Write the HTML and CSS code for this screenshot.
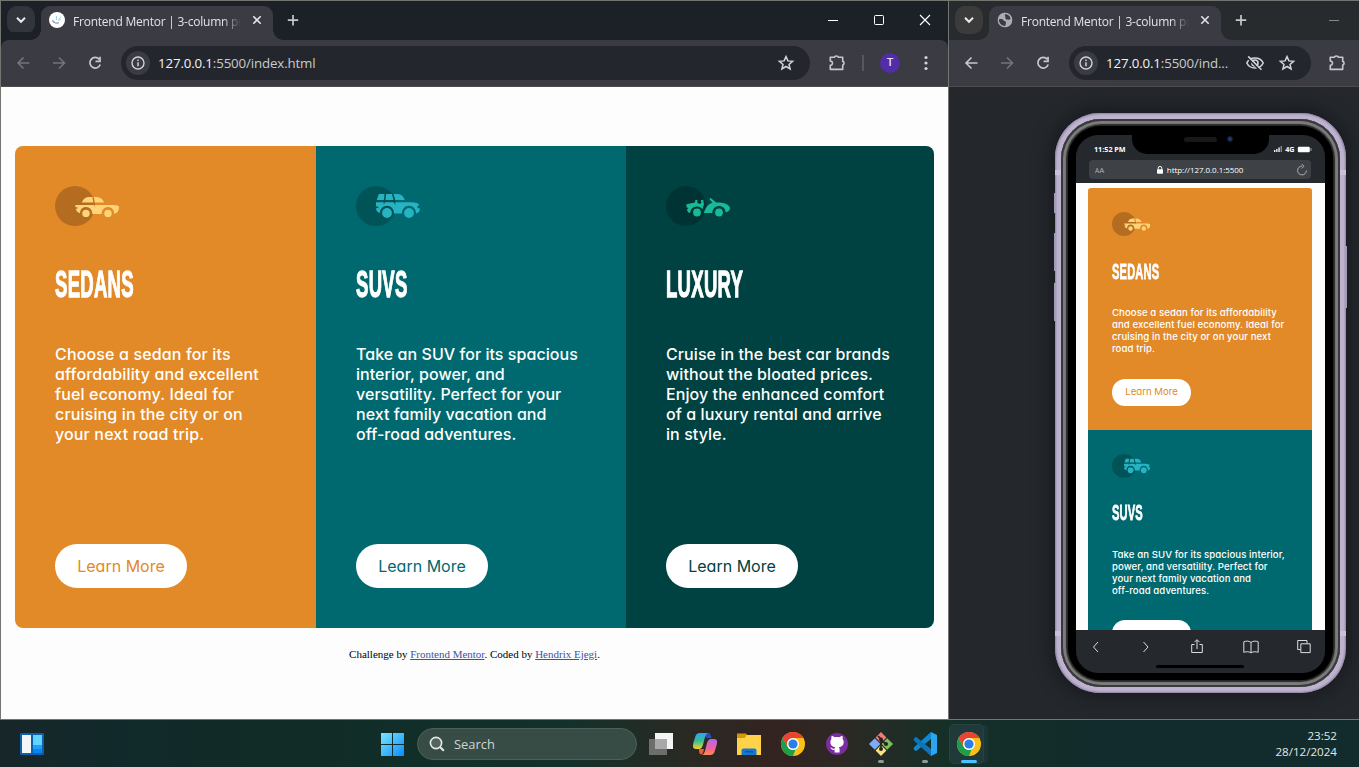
FILE: index.html
```html
<!DOCTYPE html>
<html lang="en">
<head>
<meta charset="utf-8">
<title>Desktop</title>
<link rel="stylesheet" href="styles.css">
</head>
<body>
<svg class="defs" width="0" height="0" aria-hidden="true">
  <symbol id="chev" viewBox="0 0 28 28"><path d="M10 11.8l4 4 4-4" fill="none" stroke="#e8eaed" stroke-width="2"/></symbol>
  <symbol id="close" viewBox="0 0 16 16"><path d="M4.3 4.3l7.4 7.4M11.7 4.3l-7.4 7.4" fill="none" stroke="#e3e3e3" stroke-width="1.6"/></symbol>
  <symbol id="plus" viewBox="0 0 28 28"><path d="M14 9v10.400M8.800 14.200h10.400" fill="none" stroke="#c7c8cc" stroke-width="1.700"/></symbol>
  <symbol id="back" viewBox="0 0 36 36"><path d="M24.500 18H13.300M18.500 12.500L13 18l5.500 5.500" fill="none" stroke="currentColor" stroke-width="1.600"/></symbol>
  <symbol id="fwd" viewBox="0 0 36 36"><path d="M12 18h11.200M18 12.500l5.500 5.500-5.500 5.500" fill="none" stroke="currentColor" stroke-width="1.600"/></symbol>
  <symbol id="reload" viewBox="0 0 36 36"><path d="M22.300 14.400A5.300 5.300 0 1 0 23.200 19.500" fill="none" stroke="#c7c8cc" stroke-width="1.700"/><path d="M23.900 11.800v5.400h-5.400v-1.600h3.700v-3.800z" fill="#c7c8cc"/></symbol>
  <symbol id="info" viewBox="0 0 24 24"><circle cx="12" cy="12" r="12" fill="#3a3b43"/><circle cx="12" cy="12" r="6" fill="none" stroke="#d3d4d8" stroke-width="1.400"/><path d="M12 11.300v4M12 8.500v1.500" stroke="#d3d4d8" stroke-width="1.500"/></symbol>
  <symbol id="star" viewBox="0 0 20 20"><path d="M10 3.600l1.900 4.300 4.700.4-3.600 3.100 1.100 4.600L10 13.500 5.900 16 7 11.400 3.400 8.300l4.700-.4z" fill="none" stroke="#d3d4d8" stroke-width="1.500"/></symbol>
  <symbol id="puzzle" viewBox="0 0 36 36"><path d="M11.300 12.200h4.200c.2-1.700 3.600-1.700 3.800 0h4.400v4.200c1.800.2 1.800 3.500 0 3.700v4.300H11.300v-4c3-.7 3-3.800 0-4.500z" fill="none" stroke="#c7c8cc" stroke-width="1.600" stroke-linejoin="round"/></symbol>
  <symbol id="sedan" viewBox="0 0 64 40"><circle cx="20" cy="20" r="20" fill="#000" opacity=".2"/><g fill="#ffd477"><path d="M26.800 16.600c1.500-3.800 4-5.600 7.600-5.600h3l1 5.600zM38.900 11c5.500-.4 9 1.800 10.300 5.600h-9.400z"/><path d="M20.300 19h18.900l1.200 3.200-.6-3.200h18.500c3.300.2 5.600.8 5.700 1.700 0 4.100-1.500 6.400-4.800 7.300.3-4.200-2.600-7-6.200-7-3.700 0-6.500 3-6.300 6.900H37.300c.2-4-2.600-6.900-6.300-6.900-3.600 0-6 2.700-6 6.300-2.400-.8-3.500-2.100-4.200-4.300l1.700-.4v-1.400h-1.900z"/><circle cx="31" cy="27.400" r="3.700"/><circle cx="53" cy="27.400" r="3.700"/></g></symbol>
  <symbol id="suv" viewBox="0 0 64 40"><circle cx="20" cy="20" r="20" fill="#000" opacity=".2"/><g fill="#26b3c2"><path d="M22.800 8h5.700l-.7 6h-7zM30.200 8h5.700l1.600 6h-8zM37.700 8h4.400c3 0 5.400 2.200 6.700 6H39.300z"/><path d="M20 16.300h7.600l.3 2.600.9-2.600h8.900l1.800 3-.3-3h16.300c4.300.1 7.300 1.100 7.900 2.800l-1.900.8v2.300h2.400c0 2.800-1 4.600-3.900 5.300.1-4.400-3-7.800-7-7.800-4.100 0-7.100 3.400-7 7.900h-8c.1-4.500-2.900-7.900-7-7.900-4 0-7 3.200-7.200 7.200-2.500-.7-3.700-1.800-3.800-4.600l2.200-.3v-1.600H20z"/><circle cx="31" cy="27" r="4.900"/><circle cx="53" cy="27" r="4.900"/></g></symbol>
  <symbol id="lux" viewBox="0 0 64 40"><circle cx="20" cy="20" r="20" fill="#000" opacity=".2"/><g fill="#19ba98"><path d="M20.500 18.200l8.500-1.600.4-2.700h1.900v2.800c1.200 1.300 3.200 1.200 4.200.1l-.8-2.700h2.500l.8 4.200-1.600 5.200c-1.800-3.900-8.800-4.100-11.400.3l-.9 3.300-2.200-.8-.9-2.900 1.400-1.500-2-.7z"/><path d="M43.200 13l1.500-.9 5.400 4.500c7.300-.4 13.200 1.800 13.900 5.500-.2 2.400-1.400 3.800-4.400 4.200-.3-4-3.200-6.200-6.600-6.200-4 0-6.500 3-6.700 7H37.600c2.200-5.500 4.400-9.200 9-10.400z"/><circle cx="31" cy="26.500" r="3.900"/><circle cx="53" cy="26.500" r="3.900"/></g></symbol>
  <symbol id="chrome" viewBox="0 0 24 24"><circle cx="12" cy="12" r="12" fill="#fbc116"/><path d="M1.600 6A12 12 0 0 1 22.400 6H12a6 6 0 0 0-5.200 9z" fill="#ea4335"/><path d="M1.600 6l5.200 9A6 6 0 0 0 12 18l2.500-.6L12 24A12 12 0 0 1 1.600 6z" fill="#1e9e49"/><circle cx="12" cy="12" r="6" fill="#fff"/><circle cx="12" cy="12" r="4.600" fill="#2b7de9"/></symbol>
</svg>

<main class="windows">
  <section class="window wide">
    <header class="tabs">
      <div class="tab-search"><svg width="28" height="28"><use href="#chev"/></svg></div>
      <div class="tab">
        <svg width="16" height="16" viewBox="0 0 16 16"><circle cx="8" cy="8" r="8" fill="#fff"/><path d="M3.500 8.200c.8 2.300 3.600 3.600 6.300 2.500" fill="none" stroke="#8a95b8" stroke-width="1.300"/><path d="M7.500 4v4M10 6.500V9M12 4.500l-1.500 2 1.500 1.500" stroke="#9bd5dd" fill="none"/></svg>
        <span class="tab-title">Frontend Mentor | 3-column pre</span>
        <svg width="16" height="16"><use href="#close"/></svg>
      </div>
      <svg class="new-tab" width="28" height="28"><use href="#plus"/></svg>
      <div class="controls">
        <svg width="46" height="40" viewBox="0 0 46 40"><path d="M18 19.500h10" stroke="#fff"/></svg>
        <svg width="46" height="40" viewBox="0 0 46 40"><rect x="18.500" y="14.500" width="9" height="9" rx="1" fill="none" stroke="#fff"/></svg>
        <svg width="46" height="40" viewBox="0 0 46 40"><path d="M18 14l10 10M28 14L18 24" stroke="#fff" stroke-width="1.100"/></svg>
      </div>
    </header>
    <nav class="toolbar">
      <svg class="dim" width="36" height="36"><use href="#back"/></svg>
      <svg class="dim" width="36" height="36"><use href="#fwd"/></svg>
      <svg width="36" height="36"><use href="#reload"/></svg>
      <div class="omnibox">
        <svg width="24" height="24"><use href="#info"/></svg>
        <span class="url"><b>127.0.0.1</b>:5500/index.html</span>
        <svg width="20" height="20"><use href="#star"/></svg>
      </div>
      <svg width="36" height="36"><use href="#puzzle"/></svg>
      <i class="divider"></i>
      <span class="avatar">T</span>
      <svg width="36" height="36" viewBox="0 0 36 36" fill="#d3d4d8"><circle cx="18" cy="12.500" r="1.600"/><circle cx="18" cy="18" r="1.600"/><circle cx="18" cy="23.500" r="1.600"/></svg>
    </nav>
    <div class="page">
      <div class="cards">
        <article class="card sedans">
          <svg class="car"><use href="#sedan"/></svg>
          <h2><span>SEDANS</span></h2>
          <p>Choose a sedan for its<br>affordability and excellent<br>fuel economy. Ideal for<br>cruising in the city or on<br>your next road trip.</p>
          <a class="btn">Learn More</a>
        </article>
        <article class="card suvs">
          <svg class="car"><use href="#suv"/></svg>
          <h2><span>SUVS</span></h2>
          <p>Take an SUV for its spacious<br>interior, power, and<br>versatility. Perfect for your<br>next family vacation and<br>off-road adventures.</p>
          <a class="btn">Learn More</a>
        </article>
        <article class="card luxury">
          <svg class="car"><use href="#lux"/></svg>
          <h2><span>LUXURY</span></h2>
          <p>Cruise in the best car brands<br>without the bloated prices.<br>Enjoy the enhanced comfort<br>of a luxury rental and arrive<br>in style.</p>
          <a class="btn">Learn More</a>
        </article>
      </div>
      <footer class="credit">Challenge by <u>Frontend Mentor</u>. Coded by <u>Hendrix Ejegi</u>.</footer>
    </div>
  </section>

  <section class="window narrow">
    <header class="tabs">
      <div class="tab-search"><svg width="28" height="28"><use href="#chev"/></svg></div>
      <div class="tab">
        <svg width="16" height="16" viewBox="0 0 16 16"><circle cx="8" cy="8" r="7.200" fill="#a9acb2"/><path d="M1 7.500c2-.8 4.500-.8 5.500.7s2.500.6 2.500 2.600L8.300 14C4 14.500 1.500 11.500 1 7.500zM8.500 2c-1.500 2 0 2.500 0 3s-.5 2.500 1.500 2.500 2 .5 3.500-.5C13.500 4 11 2 8.500 2z" fill="#3a3b43"/><circle cx="8" cy="8" r="6.700" fill="none" stroke="#a9acb2" stroke-width="1.200"/></svg>
        <span class="tab-title">Frontend Mentor | 3-column pre</span>
        <svg width="16" height="16"><use href="#close"/></svg>
      </div>
      <svg class="new-tab" width="28" height="28"><use href="#plus"/></svg>
      <div class="controls">
        <svg width="50" height="40" viewBox="0 0 50 40"><path d="M20 19.500h10" stroke="#85878a"/></svg>
      </div>
    </header>
    <nav class="toolbar">
      <svg width="36" height="36"><use href="#back"/></svg>
      <svg class="dim" width="36" height="36"><use href="#fwd"/></svg>
      <svg width="36" height="36"><use href="#reload"/></svg>
      <div class="omnibox">
        <svg width="24" height="24"><use href="#info"/></svg>
        <span class="url"><b>127.0.0.1</b>:5500/ind...</span>
        <svg class="eye" width="20" height="20" viewBox="0 0 20 20"><path d="M1.800 10c3.200-6.600 13.200-6.600 16.400 0-3.200 6.600-13.200 6.600-16.400 0z" fill="none" stroke="#d3d4d8" stroke-width="1.600"/><circle cx="10" cy="10" r="3" fill="none" stroke="#d3d4d8" stroke-width="1.600"/><path d="M2.300 4.600L15 17.300" stroke="#24262d" stroke-width="1.600"/><path d="M3.200 3.400l13.300 13.300" stroke="#d3d4d8" stroke-width="1.600"/></svg>
        <svg width="20" height="20"><use href="#star"/></svg>
      </div>
      <svg width="36" height="36"><use href="#puzzle"/></svg>
    </nav>
    <div class="stage">
      <div class="phone">
        <i class="key mute"></i><i class="key up"></i><i class="key down"></i><i class="key power"></i>
        <i class="band top"></i><i class="band bottom"></i>
        <div class="rim"><div class="bezel"><div class="screen">
          <div class="notch"><i class="speaker"></i><i class="lens"></i></div>
          <div class="status">
            <span class="time">11:52 PM</span>
            <span class="signal">
              <svg width="9" height="6" viewBox="0 0 9 6" fill="#fff"><path d="M0 4h1.300v2H0zM2.200 3h1.300v3H2.200zM4.400 1.600h1.300V6H4.400z"/><path d="M6.600 0h1.300v6H6.600z" opacity=".5"/></svg>
              <span>4G</span>
              <svg width="15" height="7" viewBox="0 0 15 7"><rect x=".8" y=".8" width="12" height="5.400" rx="1.200" fill="#fff"/><path d="M14 2.200v2.600" stroke="#aaa"/></svg>
            </span>
          </div>
          <div class="address">
            <span class="aa"><small>A</small>A</span>
            <span class="host"><svg width="6" height="8" viewBox="0 0 6 8"><rect y="3.300" width="6" height="4.500" rx=".8" fill="#fff"/><path d="M1.200 3.500V2.200a1.800 1.800 0 0 1 3.600 0v1.300" fill="none" stroke="#fff"/></svg>http://127.0.0.1:5500</span>
            <svg width="12" height="12" viewBox="0 0 12 12"><path d="M6 2.100A4.400 4.400 0 1 0 10.400 6.500M5.500 0l2.500 2.200L5.700 4.500" fill="none" stroke="#b9bbbe" stroke-width=".9"/></svg>
          </div>
          <div class="mobile-page">
            <article class="card sedans">
              <svg class="car"><use href="#sedan"/></svg>
              <h2><span>SEDANS</span></h2>
              <p>Choose a sedan for its affordability<br>and excellent fuel economy. Ideal for<br>cruising in the city or on your next<br>road trip.</p>
              <a class="btn">Learn More</a>
            </article>
            <article class="card suvs">
              <svg class="car"><use href="#suv"/></svg>
              <h2><span>SUVS</span></h2>
              <p>Take an SUV for its spacious interior,<br>power, and versatility. Perfect for<br>your next family vacation and<br>off-road adventures.</p>
              <a class="btn">&nbsp;</a>
            </article>
          </div>
          <div class="safari">
            <svg width="16" height="16" viewBox="0 0 16 16"><path d="M10 3L5.500 8l4.500 5"/></svg>
            <svg width="16" height="16" viewBox="0 0 16 16"><path d="M5.500 3L10 8l-4.500 5"/></svg>
            <svg width="16" height="16" viewBox="0 0 16 16"><path d="M5.500 5.500H2.700v8h10.600v-8h-2.800M8 10V.9M5.500 3.200L8 .7l2.500 2.500"/></svg>
            <svg width="16" height="16" viewBox="0 0 16 16"><path d="M8 3.400C6 1.900 3 1.800.8 2.800v10.500c2.200-.8 5.200-.8 7.200.5 2-1.300 5-1.300 7.200-.5V2.800C13 1.800 10 1.900 8 3.400zM8 3.400v10.400"/></svg>
            <svg width="16" height="16" viewBox="0 0 16 16"><path d="M4.800 4.800h9.400v8.800H4.800zM4.500 10.500H1.700V1.500H11v3"/></svg>
          </div>
          <i class="home"></i>
        </div></div></div>
      </div>
    </div>
  </section>
</main>

<footer class="taskbar">
  <svg class="widgets" width="24" height="22" viewBox="0 0 24 22"><rect width="24" height="22" rx="1" fill="#0c5fae"/><path d="M2 2h9v18H2z" fill="#f4f5f6"/><path d="M13 2h9v10h-9z" fill="#62d2ff"/><path d="M13 12h9v4h-9z" fill="#1da0f7"/><path d="M13 16h9v4h-9z" fill="#0a84ee"/></svg>
  <div class="apps">
    <svg width="24" height="24" viewBox="0 0 24 24"><defs><linearGradient id="win" gradientUnits="userSpaceOnUse" x1="0" y1="0" x2="24" y2="24"><stop stop-color="#7ceaff"/><stop offset="1" stop-color="#0a8dff"/></linearGradient></defs><path d="M1 1h11v11H1zM13 1h11v11H13zM1 13h11v11H1zM13 13h11v11H13z" fill="url(#win)"/></svg>
    <div class="search"><svg width="16" height="16" viewBox="0 0 16 16"><circle cx="7" cy="7" r="5.600" fill="#52645e" stroke="#e6eae9" stroke-width="1.600"/><path d="M11 11l3.800 3.800" stroke="#e6eae9" stroke-width="2"/></svg>Search</div>
    <svg width="24" height="24" viewBox="0 0 24 24"><path d="M6 1h18v16H6z" fill="#f4f4f4"/><path d="M0 7h18v16H0z" fill="#6d6d6d"/><path d="M6 7h12v10H6z" fill="#a9a9a9"/></svg>
    <svg width="24" height="24" viewBox="0 0 24 24"><defs><linearGradient id="cpa" x2="0" y2="1"><stop stop-color="#2aa5f5"/><stop offset=".5" stop-color="#37bf8e"/><stop offset="1" stop-color="#f9d32c"/></linearGradient><linearGradient id="cpb" x2="0" y2="1"><stop stop-color="#b168ee"/><stop offset=".6" stop-color="#f0619b"/><stop offset="1" stop-color="#ff8c4b"/></linearGradient></defs><path d="M11 1h4c2.500 0 2.700 2 3.500 5h-5z" fill="#214fc5"/><path d="M7 1h8c-2.500 1-3 4-4 8-1.200 5-2 8-5 8H3c-3.500 0-3.500-3-2.500-6.500L2.500 4C3.300 2 4.500 1 7 1z" fill="url(#cpa)"/><path d="M17 23H9c2.500-1 3-4 4-8 1.200-5 2-8 5-8h3c3.500 0 3.500 3 2.500 6.500L21.500 20c-.8 2-2 3-4.500 3z" fill="url(#cpb)"/><path d="M6 17h5c-.7 3.500-1.300 5-3 5.500-2-.5-2-3-2-5.500z" fill="#ef5b3c"/></svg>
    <svg width="24" height="24" viewBox="0 0 24 24"><path d="M0 1.500h9l2 2.500h-2l-2 3H0z" fill="#d59706"/><path d="M0 6h7.500l2-3H24v20H0z" fill="#ffd24a"/><path d="M4.500 23v-4.500a2 2 0 0 1 2-2h11a2 2 0 0 1 2 2V23z" fill="#1679cf"/><path d="M8 19h8v1.500H8z" fill="#0c58a0"/></svg>
    <svg width="24" height="24"><use href="#chrome"/></svg>
    <svg width="24" height="24" viewBox="0 0 24 24"><circle cx="12" cy="12" r="11" fill="#7a2d9e"/><path d="M9.600 20.600v-2.800c-2.800.6-3.300-1.400-4.500-2.300 2-.3 1.800 1.800 4.500 1 .1-.8.4-1.200.8-1.500-3-.4-5-1.600-5-5.100 0-1.200.4-2.200 1.100-3-.2-.6-.3-1.700.2-2.900 1.200 0 2.200.7 3 1.200 1.500-.4 3.200-.4 4.700 0 .8-.5 1.800-1.200 3-1.200.5 1.200.4 2.300.2 2.900.7.800 1.100 1.800 1.100 3 0 3.500-2 4.700-5 5.100.6.500.9 1.200.9 2.300v3.300z" fill="#fff"/></svg>
    <div class="running"><svg width="24" height="24" viewBox="0 0 24 24"><path d="M12 0l5.400 5.400L12 11 6.600 5.400z" fill="#f07c72"/><path d="M5.800 6.200l5.600 5.800-5.600 5.800L0 12z" fill="#7eaaf8"/><path d="M18.200 6.200L24 12l-5.800 5.800-5.600-5.800z" fill="#7cc05c"/><path d="M12 13l5.400 5.600L12 24l-5.400-5.400z" fill="#fbe183"/><path d="M9 4l3 3v10M12 8l5 4" stroke="#25251f" stroke-width="1.700" fill="none"/><circle cx="12" cy="17" r="2" fill="#25251f"/><circle cx="12" cy="7.500" r="2" fill="#25251f"/><circle cx="17" cy="12" r="2" fill="#25251f"/></svg></div>
    <div class="running"><svg width="24" height="24" viewBox="0 0 24 24"><path d="M18 0L.8 15.500v2L3 19.200 18 7z" fill="#1287cf"/><path d="M18 24L.8 8.500v-2L3 4.800 18 17z" fill="#0c75ba"/><path d="M18 0l6 3v18l-6 3z" fill="#2ba5ef"/></svg></div>
    <div class="active"><svg width="24" height="24"><use href="#chrome"/></svg></div>
  </div>
  <div class="clock">23:52<br>28/12/2024</div>
</footer>
</body>
</html>
```
FILE: styles.css
```css
* { box-sizing: border-box; }
body {
  margin: 0;
  width: 1359px;
  height: 767px;
  overflow: hidden;
  background: #12292a;
  font-family: "Open Sans", "Noto Sans", sans-serif;
}
svg { display: block; flex: none; }
.defs { position: absolute; }
.windows { display: flex; height: 720px; }
.window {
  display: flex;
  flex-direction: column;
  border-top: 1px solid #747571;
  border-bottom: 1px solid #747571;
  border-left: 1px solid #747571;
  overflow: hidden;
}
.wide { width: 948px; }
.narrow { width: 411px; }

/* Browser chrome */
.tabs {
  display: flex;
  height: 39px;
  flex: none;
  padding: 5px 0 0 6px;
  background: #1c2128;
}
.narrow .tabs { background: #282b2e; }
.tab-search { width: 28px; height: 28px; border-radius: 10px; background: #33353c; }
.narrow .tab-search { background: #3b3b3c; }
.tab {
  position: relative;
  display: flex;
  width: 232px;
  height: 34px;
  margin: 0 6px;
  padding: 6px 8px 0;
  border-radius: 9px 9px 0 0;
  background: #3a3b43;
}
.tab::before, .tab::after {
  content: "";
  position: absolute;
  bottom: 0;
  width: 10px;
  height: 10px;
}
.tab::before { left: -10px; background: radial-gradient(circle at 0 0, transparent 9.5px, #3a3b43 10px); }
.tab::after { right: -10px; background: radial-gradient(circle at 100% 0, transparent 9.5px, #3a3b43 10px); }
.tab-title {
  width: 168px;
  margin: 1px 8px 0 8px;
  white-space: nowrap;
  color: #e3e3e6;
  font-size: 12px;
  line-height: 17px;
  letter-spacing: -.23px;
  -webkit-mask-image: linear-gradient(90deg, #000 150px, transparent 168px);
  mask-image: linear-gradient(90deg, #000 150px, transparent 168px);
}
.controls { display: flex; margin: -5px 0 0 auto; }
.toolbar {
  display: flex;
  align-items: center;
  height: 47px;
  flex: none;
  padding: 0 4px 1px;
  border-bottom: 1px solid #4c4b4e;
  background: #3a3b43;
  color: #c7c8cc;
}
.wide .toolbar { border-radius: 8px 8px 0 0; box-shadow: 0 -8px 0 0 #1c2128; }
.toolbar .dim { color: #74757b; }
.omnibox {
  display: flex;
  align-items: center;
  width: 689px;
  height: 34px;
  margin: 0 9px 0 8px;
  padding: 0 14px 0 5px;
  border-radius: 17px;
  background: #24262d;
}
.narrow .omnibox { width: 242px; margin: 0 8px; }
.narrow .toolbar { padding-right: 0; }
.url { margin: 0 auto 0 8px; color: #c9cace; font-size: 13.300px; letter-spacing: -.14px; white-space: nowrap; }
.url b { color: #f3f3f5; font-weight: 400; }
.eye { margin-right: 12px; }
.divider { width: 2px; height: 16px; margin: 0 16px 0 7px; background: #56575f; }
.avatar {
  width: 20px;
  height: 20px;
  margin-right: 8px;
  border-radius: 50%;
  background: #512da8;
  color: #e5dcf8;
  font: 500 11px/20px Roboto, sans-serif;
  text-align: center;
}

/* Car cards; every length scales with the font size */
.page { flex: 1; padding: 59px 14px 0; background: #fdfdfd; }
.cards {
  display: grid;
  grid-template-columns: 301px 310px 308px;
  height: 482px;
  border-radius: 8px;
  overflow: hidden;
  font-size: 16px;
}
.card {
  display: flex;
  flex-direction: column;
  align-items: flex-start;
  padding: 2.500em;
  color: #fff;
  font-family: Inter, sans-serif;
  font-feature-settings: "cv11";
}
.sedans { background: #e28928; --tone: #e28928; --track: .009em; }
.suvs { background: #00696f; --tone: #00696f; --track: .003em; }
.luxury { background: #004241; --tone: #004241; --track: .005em; }
.car { width: 4em; height: 2.500em; }
.card h2 {
  display: flex;
  align-items: center;
  height: 7.375em;
  margin: 0;
  font-size: 1em;
}
.card h2 span {
  display: block;
  font: 700 2.250em/1 "Liberation Sans", sans-serif;
  letter-spacing: .015em;
  -webkit-text-stroke: .035em #fff;
  transform: scaleX(.515);
  transform-origin: left;
}
.card p {
  margin: 0 0 auto;
  font-size: 1em;
  font-weight: 500;
  line-height: 1.250;
  letter-spacing: var(--track);
  white-space: nowrap;
}
.btn {
  width: 8.250em;
  height: 2.750em;
  border-radius: 1.375em;
  background: #fff;
  color: var(--tone);
  line-height: 2.750em;
  text-align: center;
}
.credit { margin-top: 20px; font: 11px/13px "Liberation Serif", serif; text-align: center; }
.credit u { color: #3e52a3; }

/* Phone preview */
.stage {
  flex: 1;
  padding: 26px 0 0 106px;
  background: #24282d;
}
.phone {
  position: relative;
  width: 291px;
  height: 580px;
  padding: 6px;
  border-radius: 45px;
  background: #bdb2d0;
  box-shadow: inset 0 0 2px 1px #8b839c, 0 0 18px 4px #17191d;
}
.rim {
  position: relative;
  height: 568px;
  padding: 7px;
  border-radius: 40px;
  background: #000;
  box-shadow: inset 0 0 0 2px #39393b, inset 0 0 1px 5px #7c7c7c, inset 0 0 1px 7px #2a2a2a;
}
.bezel { height: 554px; padding: 9px 8px 7px 8px; border-radius: 33px; background: #000; }
.screen {
  position: relative;
  display: flex;
  flex-direction: column;
  width: 249px;
  height: 538px;
  border-radius: 22px;
  background: #25292e;
  overflow: hidden;
}
.key { position: absolute; width: 2px; background: #a49bb6; }
.mute { left: -1px; top: 80px; height: 20px; }
.up { left: -1px; top: 120px; height: 38px; }
.down { left: -1px; top: 170px; height: 38px; }
.power { right: -1px; top: 133px; height: 62px; }
.band { position: absolute; left: 0; width: 291px; height: 5px; background: #cac1d9; }
.band.top { top: 57px; }
.band.bottom { top: 518px; }
.notch {
  position: absolute;
  left: 56px;
  top: -1px;
  width: 137px;
  height: 20px;
  border-radius: 0 0 15px 15px;
  background: #000;
}
.speaker { position: absolute; left: 52px; top: 3px; width: 33px; height: 5px; border-radius: 3px; background: #17181a; }
.lens { position: absolute; left: 95px; top: 2px; width: 6px; height: 6px; border-radius: 50%; background: radial-gradient(#245090, #101c30 60%, #0c0e12); }
.status {
  display: flex;
  justify-content: space-between;
  align-items: center;
  height: 25px;
  flex: none;
  padding: 3px 13px 0 18px;
  color: #fff;
  font-size: 7.200px;
  font-weight: 700;
}
.signal { display: flex; align-items: center; gap: 2.500px; }
.address {
  display: flex;
  justify-content: space-between;
  align-items: center;
  width: 222px;
  height: 19px;
  flex: none;
  margin: 0 0 4px 13px;
  padding: 0 3px 0 6px;
  border-radius: 4px;
  background: #3e4145;
  color: #fff;
}
.aa { color: #b3b5b8; font-size: 8px; }
.aa small { font-size: 6.500px; }
.host { display: flex; align-items: center; gap: 4px; font-size: 8px; letter-spacing: -.05px; }
.mobile-page { height: 447px; flex: none; padding: 5px 12px 0; background: #fdfdfd; overflow: hidden; font-size: 9.600px; }
.mobile-page .card { width: 224px; height: 241.500px; }
.mobile-page .card p { letter-spacing: .08px; }
.mobile-page .suvs p { padding-top: 1px; }
.mobile-page .suvs .btn { margin-top: -1px; margin-bottom: 1px; }
.mobile-page .sedans { border-radius: 3px 3px 0 0; }
.safari {
  display: flex;
  padding: 9px 0 0 12px;
}
.safari svg { fill: none; stroke: #dcdddf; stroke-width: 1; margin-right: 37px; }
.safari svg:first-child { margin-right: 34px; }
.safari svg:nth-child(2) { margin-right: 35px; }
.safari svg:nth-child(3) { margin-right: 38px; }
.home { position: absolute; left: 80px; bottom: 5px; width: 88px; height: 3px; border-radius: 2px; background: #000; }

/* Taskbar */
.taskbar {
  display: flex;
  align-items: center;
  height: 47px;
  padding: 1px 22px 0 20px;
  background: linear-gradient(90deg, #172629 0, #112a2b 130px, #112b27 260px, #12312a 560px, #2a2923 690px, #332321 780px, #2b2924 850px, #143027 950px, #122b2c 1100px);
}
.apps { display: flex; align-items: center; gap: 20px; margin-left: 336px; }
.search {
  display: flex;
  align-items: center;
  gap: 9px;
  width: 220px;
  height: 32px;
  margin: 0 -8px 0 -7px;
  padding-left: 11px;
  border: 1px solid #4c6059;
  border-radius: 16px;
  background: #384c46;
  color: #ced6d3;
  font-size: 12.900px;
}
.running { position: relative; }
.running::after {
  content: "";
  position: absolute;
  left: 9px;
  bottom: -7px;
  width: 6px;
  height: 3px;
  border-radius: 2px;
  background: #8f9b98;
}
.active {
  position: relative;
  width: 35px;
  height: 40px;
  margin-left: -8px;
  padding: 7px 0 0 7px;
  border: 1px solid #294140;
  border-radius: 5px;
  background: #20393a;
  box-shadow: 5px 0 0 -1px #1b3434;
}
.active::before {
  content: "";
  position: absolute;
  left: 11px;
  bottom: 0;
  width: 16px;
  height: 3px;
  border-radius: 2px;
  background: #4cc2ff;
}
.clock { margin-left: auto; color: #e3e8e8; font-size: 11.600px; line-height: 16px; text-align: right; }
```
